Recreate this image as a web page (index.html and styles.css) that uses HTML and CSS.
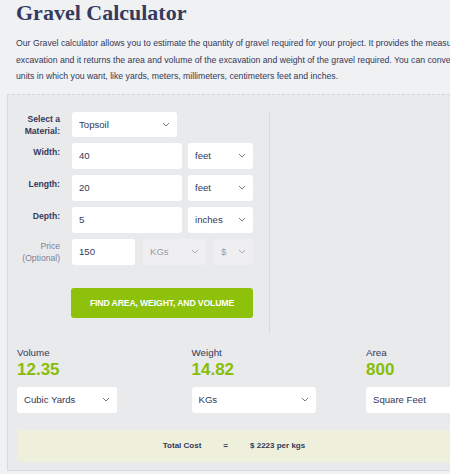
FILE: index.html
```html
<!DOCTYPE html>
<html lang="en">
<head>
  <meta charset="UTF-8" />
  <title>Gravel Calculator</title>
  <meta name="viewport" content="width=device-width, initial-scale=1.0" />
  <link rel="stylesheet" href="styles.css">
</head>
<body>
  <div class="page">
    <h1>Gravel Calculator</h1>
    <p class="intro">Our Gravel calculator allows you to estimate the quantity of gravel required for your project. It provides the measurements of the<br>excavation and it returns the area and volume of the excavation and weight of the gravel required. You can convert the results into<br>units in which you want, like yards, meters, millimeters, centimeters feet and inches.</p>

    <div class="calc">
      <div class="calc-form">
        <div class="form-row">
          <label class="two-line">Select a Material:</label>
          <div class="controls">
            <div class="select material">Topsoil <svg class="chev" width="8" height="5" viewBox="0 0 8 5"><path d="M1 1l3 3 3-3" fill="none" stroke="#777" stroke-width="1"/></svg></div>
          </div>
        </div>
        <div class="form-row">
          <label>Width:</label>
          <div class="controls">
            <div class="input wide">40</div>
            <div class="select unit">feet <svg class="chev" width="8" height="5" viewBox="0 0 8 5"><path d="M1 1l3 3 3-3" fill="none" stroke="#777" stroke-width="1"/></svg></div>
          </div>
        </div>
        <div class="form-row">
          <label>Length:</label>
          <div class="controls">
            <div class="input wide">20</div>
            <div class="select unit">feet <svg class="chev" width="8" height="5" viewBox="0 0 8 5"><path d="M1 1l3 3 3-3" fill="none" stroke="#777" stroke-width="1"/></svg></div>
          </div>
        </div>
        <div class="form-row">
          <label>Depth:</label>
          <div class="controls">
            <div class="input wide">5</div>
            <div class="select unit">inches <svg class="chev" width="8" height="5" viewBox="0 0 8 5"><path d="M1 1l3 3 3-3" fill="none" stroke="#777" stroke-width="1"/></svg></div>
          </div>
        </div>
        <div class="form-row price-row">
          <label class="muted two-line">Price (Optional)</label>
          <div class="controls">
            <div class="input price">150</div>
            <div class="select disabled kgs">KGs <svg class="chev" width="8" height="5" viewBox="0 0 8 5"><path d="M1 1l3 3 3-3" fill="none" stroke="#aaa" stroke-width="1"/></svg></div>
            <div class="select disabled cur">$ <svg class="chev" width="8" height="5" viewBox="0 0 8 5"><path d="M1 1l3 3 3-3" fill="none" stroke="#aaa" stroke-width="1"/></svg></div>
          </div>
        </div>
        <button class="find-btn">FIND AREA, WEIGHT, AND VOLUME</button>
      </div>

      <div class="results">
        <div class="result">
          <div class="result-label">Volume</div>
          <div class="result-value">12.35</div>
          <div class="select res-vol">Cubic Yards <svg class="chev" width="8" height="5" viewBox="0 0 8 5"><path d="M1 1l3 3 3-3" fill="none" stroke="#777" stroke-width="1"/></svg></div>
        </div>
        <div class="result">
          <div class="result-label">Weight</div>
          <div class="result-value">14.82</div>
          <div class="select res-wt">KGs <svg class="chev" width="8" height="5" viewBox="0 0 8 5"><path d="M1 1l3 3 3-3" fill="none" stroke="#777" stroke-width="1"/></svg></div>
        </div>
        <div class="result">
          <div class="result-label">Area</div>
          <div class="result-value">800</div>
          <div class="select res-area">Square Feet <svg class="chev" width="8" height="5" viewBox="0 0 8 5"><path d="M1 1l3 3 3-3" fill="none" stroke="#777" stroke-width="1"/></svg></div>
        </div>
      </div>

      <div class="total">
        <span class="total-label">Total Cost</span>
        <span class="total-eq">=</span>
        <span class="total-value">$ 2223 per kgs</span>
      </div>
    </div>
  </div>
</body>
</html>
```

FILE: styles.css
```css
body {
  margin: 0;
  background: #f0f1f3;
  font-family: "Liberation Sans", Arial, sans-serif;
  color: #33385a;
  overflow: hidden;
}

.page {
  width: 640px;
}

h1 {
  font-family: "Liberation Serif", "Times New Roman", serif;
  font-size: 22px;
  font-weight: bold;
  color: #353a5e;
  margin: 0;
  padding: 2px 0 0 16px;
  line-height: 22px;
}

.intro {
  font-size: 8.7px;
  line-height: 16.5px;
  margin: 11px 0 0 16px;
  white-space: nowrap;
  color: #33385a;
}

/* Calculator panel */
.calc {
  margin: 9px 0 0 7px;
  background: #e9eaec;
  border-top: 1px dashed #d6d7da;
  border-left: 1px solid #d9dadd;
  border-bottom: 1px solid #d9dadd;
  padding: 17px 0 8px 9px;
}

.calc-form {
  width: 236px;
  padding-right: 16px;
  border-right: 1px solid #d8d9dc;
  display: flex;
  flex-direction: column;
  gap: 6px;
  padding-bottom: 16px;
}

.form-row {
  display: flex;
  gap: 12px;
}

.form-row label {
  width: 43px;
  text-align: right;
  font-weight: bold;
  font-size: 8.6px;
  line-height: 12px;
  padding-top: 3px;
  color: #33385a;
}

.form-row label.two-line {
  padding-top: 1px;
  height: 24px;
}

.form-row label.muted {
  color: #7d8299;
  font-weight: normal;
}

.controls {
  display: flex;
  gap: 6px;
}

.input, .select {
  height: 26px;
  background: #fff;
  border-radius: 3px;
  font-size: 9.6px;
  color: #33385a;
  display: flex;
  align-items: center;
  padding: 0 7px;
  box-sizing: border-box;
}

.select {
  justify-content: space-between;
}

.chev {
  flex-shrink: 0;
}

.material { width: 105px; height: 25px; }
.wide { width: 110px; }
.unit { width: 65px; }
.price { width: 63px; }
.kgs { width: 63px; margin-left: 2px; }
.cur { width: 39px; margin-left: 2px; }

.select.disabled {
  background: #efeff1;
  color: #9a9da8;
}

.find-btn {
  margin: 17px 0 0 54px;
  width: 182px;
  height: 30px;
  background: #8dc10a;
  border: none;
  border-radius: 3px;
  color: #fff;
  font-family: "Liberation Sans", Arial, sans-serif;
  font-weight: bold;
  font-size: 8.7px;
  letter-spacing: -0.15px;
  cursor: pointer;
}

/* Results */
.results {
  display: flex;
  margin-top: 12px;
}

.result {
  width: 174.5px;
}

.result-label {
  font-size: 9.8px;
  line-height: 13px;
}

.result-value {
  font-size: 17px;
  font-weight: bold;
  color: #88bd0a;
  line-height: 22px;
  margin-bottom: 6px;
}

.res-vol { width: 100px; }
.res-wt { width: 124px; }
.res-area { width: 124px; }

.total {
  margin-top: 17px;
  width: 434px;
  padding-right: 6px;
  height: 32px;
  background: #eef0dc;
  display: flex;
  justify-content: center;
  align-items: center;
  font-size: 8px;
  font-weight: bold;
  color: #33385a;
}

.total-eq {
  margin: 0 22px 0 22px;
}
```
